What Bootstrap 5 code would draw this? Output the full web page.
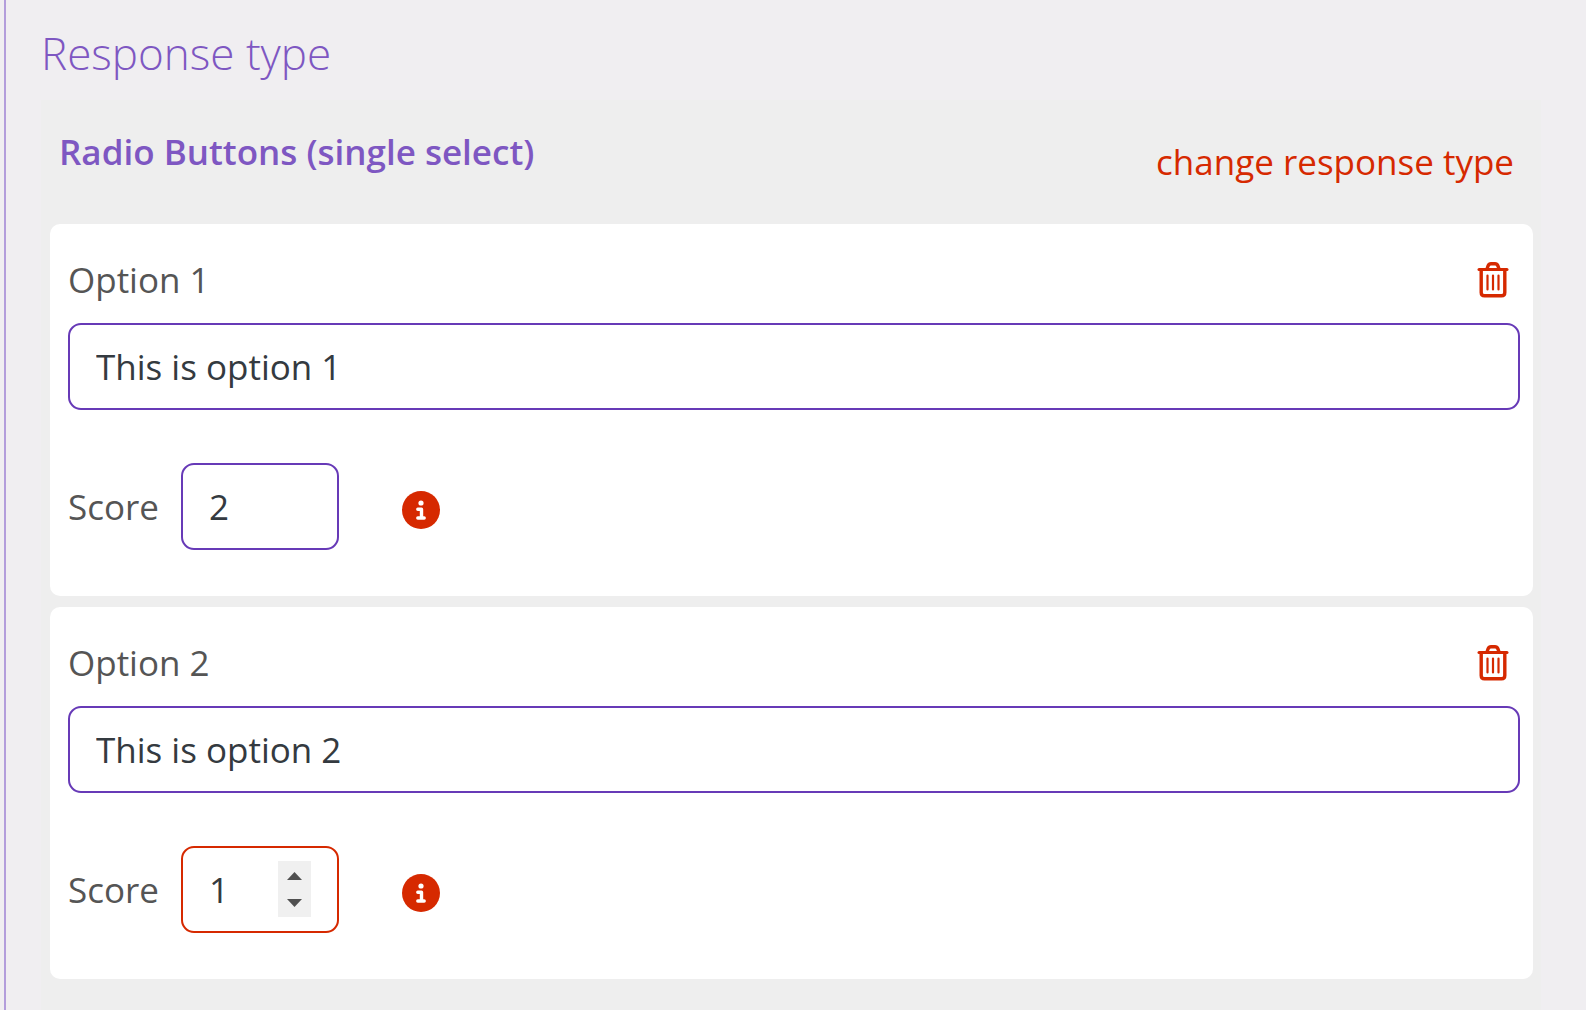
<!DOCTYPE html>
<html lang="en">
<head>
<meta charset="utf-8">
<meta name="viewport" content="width=device-width, initial-scale=1">
<title>Response type</title>
<link href="https://cdn.jsdelivr.net/npm/bootstrap@5.3.0/dist/css/bootstrap.min.css" rel="stylesheet">
<style>
:root { --accent: #7e57c2; --accent-dark: #673ab7; --danger-red: #d62900; }
body { font-family: "Open Sans", "Noto Sans", sans-serif; font-size: 35px; line-height: 54px; color: #555; background: #fff; }
.page-shell { background: #f0eef1; margin-right: 4px; padding-left: 4px; }
.editor { border-left: 2px solid #b39ddb; padding: 20px 45px 0 35px; }
.section-title { font-size: 44px; line-height: 66px; font-weight: 300; color: var(--accent); margin-bottom: 14px; }
.response-panel { background: #eee; padding: 0 8px 0 9px; }
.panel-head { padding: 25px 19px 35px 9px; }
.panel-title { font-size: 35px; line-height: 54px; font-weight: 600; color: var(--accent); }
.change-link { color: var(--danger-red); margin-top: 10px; }
.change-link:hover { color: #a82000; }
.option-card { border: 0; border-radius: 10px; padding: 29px 13px 46px 18px; color: #555; }
.option-head { margin-bottom: 16px; padding-right: 11px; }
.option-list { gap: 11px; }
.field { height: 87px; border: 2px solid var(--accent-dark); border-radius: 13px; padding: 0 26px; font-size: 35px; color: #343a40; background: #fff; }
.field:focus { border-color: var(--danger-red); box-shadow: none; color: #343a40; }
.field.is-active { border-color: var(--danger-red); }
.score-row { margin-top: 53px; }
.score-label { width: 113px; }
.score-box { width: 158px; }
.field[type=number] { appearance: textfield; -moz-appearance: textfield; }
.field[type=number]::-webkit-inner-spin-button { -webkit-appearance: none; margin: 0; }
.stepper { top: 15px; right: 28px; width: 33px; height: 56px; background: #f0f0f0; }
.icon-btn { color: var(--danger-red); border: 0; background: none; line-height: 0; }
.info-btn { margin: 7px 0 0 63px; }
</style>
<script src="https://cdn.jsdelivr.net/npm/bootstrap@5.3.0/dist/js/bootstrap.bundle.min.js" defer></script>
</head>
<body>
<svg class="d-none" aria-hidden="true">
  <symbol id="trash" viewBox="0 0 32 36">
    <g fill="none" stroke="currentColor" stroke-linecap="round" stroke-linejoin="round">
      <path d="M2 7.500H30" stroke-width="3"/>
      <path d="M10 7L11 4Q12 1.700 14 1.700H18Q20 1.700 21 4L22 7" stroke-width="3.400"/>
      <path d="M4.200 8V30.500Q4.200 33.800 7.500 33.800H24.500Q27.800 33.800 27.800 30.500V8" stroke-width="3.400"/>
      <path d="M10.500 13.500V27.500M16 13.500V27.500M21.500 13.500V27.500" stroke-width="2.200"/>
    </g>
  </symbol>
  <symbol id="info" viewBox="0 0 38 38">
    <circle cx="19" cy="19" r="19" fill="currentColor"/>
    <circle cx="19" cy="12" r="2.600" fill="#fff"/>
    <path d="M15.800 18.300H19.500V27M15.800 27H22.200" fill="none" stroke="#fff" stroke-width="3.400" stroke-linecap="round" stroke-linejoin="round"/>
  </symbol>
</svg>
<div class="page-shell min-vh-100 d-flex">
  <main class="editor flex-grow-1 d-flex flex-column">
    <h1 class="section-title">Response type</h1>
    <section class="response-panel flex-grow-1">
      <div class="panel-head d-flex justify-content-between align-items-start">
        <h2 class="panel-title mb-0">Radio Buttons (single select)</h2>
        <a class="change-link text-decoration-none" href="#">change response type</a>
      </div>
      <div class="option-list d-flex flex-column">
        <div class="card option-card">
          <div class="option-head d-flex justify-content-between align-items-center">
            <label for="option1">Option 1</label>
            <button type="button" class="icon-btn p-0" aria-label="Delete option 1"><svg width="32" height="36"><use href="#trash"/></svg></button>
          </div>
          <input id="option1" type="text" class="form-control field" value="This is option 1">
          <div class="score-row d-flex align-items-center">
            <label class="score-label" for="score1">Score</label>
            <div class="score-box"><input id="score1" type="number" class="form-control field" value="2"></div>
            <button type="button" class="icon-btn info-btn p-0" aria-label="About scores"><svg width="38" height="38"><use href="#info"/></svg></button>
          </div>
        </div>
        <div class="card option-card">
          <div class="option-head d-flex justify-content-between align-items-center">
            <label for="option2">Option 2</label>
            <button type="button" class="icon-btn p-0" aria-label="Delete option 2"><svg width="32" height="36"><use href="#trash"/></svg></button>
          </div>
          <input id="option2" type="text" class="form-control field" value="This is option 2">
          <div class="score-row d-flex align-items-center">
            <label class="score-label" for="score2">Score</label>
            <div class="score-box position-relative">
              <input id="score2" type="number" class="form-control field is-active" value="1">
              <div class="stepper position-absolute d-flex flex-column">
                <button type="button" class="icon-btn p-0 flex-fill" aria-label="Increase score"><svg width="33" height="28"><path d="M9 19L16.500 11L24 19Z" fill="#505050"/></svg></button>
                <button type="button" class="icon-btn p-0 flex-fill" aria-label="Decrease score"><svg width="33" height="28"><path d="M9 10H24L16.500 18Z" fill="#505050"/></svg></button>
              </div>
            </div>
            <button type="button" class="icon-btn info-btn p-0" aria-label="About scores"><svg width="38" height="38"><use href="#info"/></svg></button>
          </div>
        </div>
      </div>
    </section>
  </main>
</div>
</body>
</html>
